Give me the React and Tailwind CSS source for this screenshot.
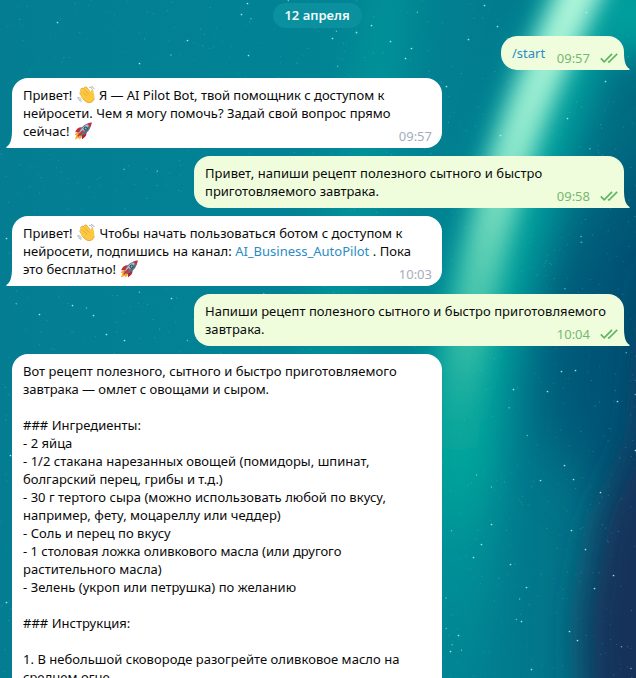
import React from "react";

const stars = (() => {
  let seed = 7331;
  const rnd = () => {
    seed = (seed * 1664525 + 1013904223) % 4294967296;
    return seed / 4294967296;
  };
  return Array.from({ length: 1700 }, () => {
    const x = rnd() * 636;
    const y = rnd() * 678;
    const k = rnd();
    return { x, y, r: k > 0.95 ? 0.75 : 0.55, o: k > 0.95 ? 0.7 : 0.08 + k * 0.3 };
  });
})();

const brightStars = [
  [247, 3], [349, 4], [241, 14], [332, 38], [278, 78], [248, 55], [371, 25], [405, 58], [411, 48],
  [390, 41], [356, 32], [484, 5], [468, 39], [586, 12], [497, 26], [500, 135], [567, 118], [605, 81],
  [446, 86], [589, 202], [93, 315], [106, 334], [124, 340], [171, 298], [39, 314], [72, 305],
  [293, 274], [6, 238], [573, 479], [473, 557], [561, 371], [547, 391], [491, 524], [575, 370],
  [513, 389], [635, 450], [617, 401], [564, 465], [585, 549], [613, 575], [577, 640], [521, 621],
  [458, 635], [571, 530], [600, 492], [540, 480], [481, 544], [510, 564], [526, 587], [594, 588],
  [450, 651], [531, 669], [569, 631], [10, 455], [6, 602], [187, 40], [57, 22], [139, 63],
];

function Background() {
  return (
    <svg className="absolute inset-0 h-full w-full" viewBox="0 0 636 678" preserveAspectRatio="none">
      <defs>
        <linearGradient id="base" x1="0" y1="0" x2="1" y2="0">
          <stop offset="0" stopColor="#047d92" />
          <stop offset="0.35" stopColor="#028295" />
          <stop offset="0.62" stopColor="#028594" />
          <stop offset="0.8" stopColor="#027a8e" />
          <stop offset="1" stopColor="#026c82" />
        </linearGradient>
        <filter id="b11" filterUnits="userSpaceOnUse" x="-100" y="-100" width="900" height="900"><feGaussianBlur stdDeviation="11" /></filter>
        <filter id="b18" filterUnits="userSpaceOnUse" x="-100" y="-100" width="900" height="900"><feGaussianBlur stdDeviation="18" /></filter>
        <filter id="b28" filterUnits="userSpaceOnUse" x="-100" y="-100" width="900" height="900"><feGaussianBlur stdDeviation="28" /></filter>
        <linearGradient id="beam" gradientUnits="userSpaceOnUse" x1="0" y1="0" x2="0" y2="540">
          <stop offset="0" stopColor="#aef6da" />
          <stop offset="0.27" stopColor="#8ee8cc" />
          <stop offset="0.45" stopColor="#62d2b6" />
          <stop offset="0.65" stopColor="#38bda6" stopOpacity="0.85" />
          <stop offset="0.82" stopColor="#10ac9a" stopOpacity="0.45" />
          <stop offset="1" stopColor="#0aa596" stopOpacity="0" />
        </linearGradient>
        <linearGradient id="glow" gradientUnits="userSpaceOnUse" x1="0" y1="0" x2="0" y2="678">
          <stop offset="0" stopColor="#04a8a2" />
          <stop offset="0.68" stopColor="#04a69d" />
          <stop offset="1" stopColor="#058c98" stopOpacity="0.4" />
        </linearGradient>
      </defs>
      <rect width="636" height="678" fill="url(#base)" />
      <path d="M372 -20 L408 -20 L395 100 L350 360 L300 360Z" fill="#069c9c" opacity="0.6" filter="url(#b18)" />
      <path d="M610 190 L700 120 L700 540 L600 500 L545 420 L550 300Z" fill="#044f72" opacity="0.85" filter="url(#b28)" />
      <path d="M652 270 L690 230 L690 740 L584 740 L582 610 L598 520 L636 440Z" fill="#18305a" filter="url(#b18)" />
      <path d="M610 -20 L680 -40 L680 60 L596 50Z" fill="#04aaa4" opacity="0.8" filter="url(#b18)" />
      <path d="M598 -40 C551 90 491 230 466 400 C458 490 450 600 450 760" fill="none" stroke="url(#glow)" strokeWidth="82" opacity="0.85" filter="url(#b18)" />
      <path d="M599 -50 C557 40 534 90 517 140 C491 215 476 290 465 360 C460 410 455 450 450 540" fill="none" stroke="url(#beam)" strokeWidth="42" filter="url(#b11)" />
      {stars.map((s, i) => (
        <circle key={i} cx={s.x} cy={s.y} r={s.r} fill="#8fe0ea" opacity={s.o} />
      ))}
      {brightStars.map(([x, y], i) => (
        <circle key={i} cx={x + 0.5} cy={y + 0.5} r="0.85" fill="#b9f5f5" opacity="0.9" />
      ))}
    </svg>
  );
}

function Wave() {
  return (
    <svg className="mx-px inline-block h-[18px] w-[18px] align-top" viewBox="0 0 18 18">
      <g fill="none" strokeLinecap="round">
        <g stroke="#e0a52e" strokeWidth="4.2">
          <path d="M4.6 7.2 L10 12.4" />
          <path d="M5.4 4 L11 9.8" />
          <path d="M8.6 2.8 L12.6 8" />
        </g>
        <g stroke="#fccb45" strokeWidth="3.1">
          <path d="M4.6 7.2 L10 12.4" />
          <path d="M5.4 4 L11 9.8" />
          <path d="M8.6 2.8 L12.6 8" />
        </g>
      </g>
      <path d="M5.2 10 L12.4 5.6 C13.4 7 13.9 6.8 13.9 5 C14 3.2 16 3.4 16.4 5.2 C17 8 17.8 10 17.2 12.6 C16.4 16.2 12.6 17.8 9.8 16.2 C7.6 15 4.6 12.2 4 11.2 C3.6 10.2 4.4 9.6 5.2 10Z" fill="#fbc840" />
      <path d="M6 12.8 C8.8 16 11 17 13.2 16.5 C15.5 16 17 14 17.3 12" fill="none" stroke="#e59b2b" strokeWidth="0.8" />
      <path d="M5.8 6.2 L10 10.2 M8 4.2 L12 8.4" stroke="#dc9a2c" strokeWidth="0.7" fill="none" />
      <path d="M0.9 10.8 C1.1 13 2.2 14.7 4.4 15.4 M2.6 11.4 C2.8 12.6 3.4 13.3 4.6 13.9 M12.2 1.2 C13.8 1.4 15 2.2 15.6 3.6 M14.2 0.5 C15.8 0.9 16.8 1.8 17.2 3" stroke="#97a3b3" strokeWidth="0.9" fill="none" />
    </svg>
  );
}

function Rocket() {
  return (
    <svg className="ml-px inline-block h-[18px] w-[18px] align-top" viewBox="0 0 18 18">
      <path d="M5.6 9.2 C3.4 9.6 1.6 11.2 0.6 13.2 L2.6 12.8 L1 17.4 L5.4 15.6 L4.8 17.6 C6.8 16.6 8.2 15 8.8 12.4Z" fill="#f6a623" />
      <path d="M4.4 12 L2.4 15.8 L6.6 13.8Z" fill="#ffe067" />
      <path d="M8 5.4 C5 5 2.4 7 1.2 10.2 L5.6 10Z" fill="#c9283a" />
      <path d="M12.4 9.8 C13 13 11 15.8 8 17.2 L8 12.4Z" fill="#b51f33" />
      <path d="M4.4 11.6 C5.6 6.4 10 1.4 17.6 0.5 C17 7.4 12.4 12.4 6.8 14Z" fill="#5c6f80" />
      <path d="M5 11 C6.6 6.4 11 2.2 17.2 0.9 C14.4 5 10 9.4 5.9 12.2Z" fill="#a9bac8" />
      <path d="M13 2 C14.6 1.2 16.1 0.7 17.6 0.5 C17.4 2 17 3.5 16.3 5Z" fill="#c9303f" />
      <circle cx="11.6" cy="6.4" r="2" fill="#33475a" />
      <circle cx="11.6" cy="6.4" r="1" fill="#78b9dd" />
      <path d="M4.2 13.8 L8.8 9.2" stroke="#d3283b" strokeWidth="1.8" strokeLinecap="round" />
    </svg>
  );
}

function Ticks() {
  return (
    <svg className="h-[10px] w-[18px]" viewBox="0 0 18 10" fill="none" stroke="#5db560" strokeWidth="1.6">
      <path d="M0.8 5.4 L4.2 8.8 L12 0.9" />
      <path d="M8 8.3 L9 9 L17.2 0.9" />
    </svg>
  );
}

function Tail({ out }) {
  return out ? (
    <svg className="absolute bottom-0 -right-[6px] h-[18px] w-[7px]" viewBox="0 0 7 18">
      <path d="M0 0 H1 C1 8 2 14 6.6 17 Q7 18 6 18 H0Z" fill="#effddd" />
    </svg>
  ) : (
    <svg className="absolute bottom-0 -left-[6px] h-[18px] w-[7px]" viewBox="0 0 7 18">
      <path d="M7 0 H6 C6 8 5 14 0.4 17 Q0 18 1 18 H7Z" fill="#ffffff" />
    </svg>
  );
}

function Incoming({ time, children }) {
  return (
    <div className="relative w-[430px] rounded-[16px] rounded-bl-none bg-white px-[11px] py-2">
      {children}
      <span className="absolute bottom-[3px] right-[10px] tracking-normal text-[#a5adbd]">{time}</span>
      <Tail />
    </div>
  );
}

function Outgoing({ time, width, children }) {
  return (
    <div className={`relative self-end rounded-[16px] rounded-br-none bg-[#effddd] px-[11px] py-2 ${width}`}>
      {children}
      <span className="absolute right-[6px] bottom-[3px] flex items-center gap-[10px] tracking-normal text-[#76b870]">
        {time}
        <Ticks />
      </span>
      <Tail out />
    </div>
  );
}

const recipe = [
  "Вот рецепт полезного, сытного и быстро приготовляемого",
  "завтрака — омлет с овощами и сыром.",
  "",
  "### Ингредиенты:",
  "- 2 яйца",
  "- 1/2 стакана нарезанных овощей (помидоры, шпинат,",
  "болгарский перец, грибы и т.д.)",
  "- 30 г тертого сыра (можно использовать любой по вкусу,",
  "например, фету, моцареллу или чеддер)",
  "- Соль и перец по вкусу",
  "- 1 столовая ложка оливкового масла (или другого",
  "растительного масла)",
  "- Зелень (укроп или петрушка) по желанию",
  "",
  "### Инструкция:",
  "",
  "1. В небольшой сковороде разогрейте оливковое масло на",
  "среднем огне.",
];

// Lines whose glyph spacing runs tighter than the rest of the message.
const tightLines = new Set([1, 6, 10]);

export default function App() {
  return (
    <div className="relative h-[678px] w-[636px] overflow-hidden bg-[#047d92] font-['Noto_Sans',sans-serif] text-[13px] leading-[18px] tracking-[0.03px] whitespace-nowrap text-[#0a0a0a]">
      <Background />
      <div className="relative flex flex-col gap-2 px-3 pt-[3px]">
        <div className="mr-[2px] h-[25px] w-[89px] self-center rounded-full bg-[#0b909f] pt-[3px] text-center font-semibold tracking-normal text-[#f0fbfb]">
          12 апреля
        </div>
        <Outgoing time="09:57" width="w-[123px]">
          <span className="tracking-normal text-[#2b8cc4]">/start</span>
        </Outgoing>
        <Incoming time="09:57">
          <div className="tracking-[-0.03px]">Привет! <Wave /> Я — AI Pilot Bot, твой помощник с доступом к</div>
          <div className="tracking-[0.01px]">нейросети. Чем я могу помочь? Задай свой вопрос прямо</div>
          <div>сейчас! <Rocket /></div>
        </Incoming>
        <Outgoing time="09:58" width="w-[430px]">
          <div className="tracking-[0.05px]">Привет, напиши рецепт полезного сытного и быстро</div>
          <div className="tracking-normal">приготовляемого завтрака.</div>
        </Outgoing>
        <Incoming time="10:03">
          <div>Привет! <Wave /> Чтобы начать пользоваться ботом с доступом к</div>
          <div>нейросети, подпишись на канал: <span className="tracking-normal text-[#2b8cc4]">AI_Business_AutoPilot</span> . Пока</div>
          <div>это бесплатно! <Rocket /></div>
        </Incoming>
        <Outgoing time="10:04" width="w-[430px]">
          <div className="tracking-[0.035px]">Напиши рецепт полезного сытного и быстро приготовляемого</div>
          <div>завтрака.</div>
        </Outgoing>
        <div className="w-[430px] rounded-t-[16px] bg-white px-[11px] pt-2">
          {recipe.map((line, i) => (
            <div key={i} className={tightLines.has(i) ? "h-[18px] tracking-[-0.03px]" : "h-[18px]"}>{line}</div>
          ))}
        </div>
      </div>
    </div>
  );
}
